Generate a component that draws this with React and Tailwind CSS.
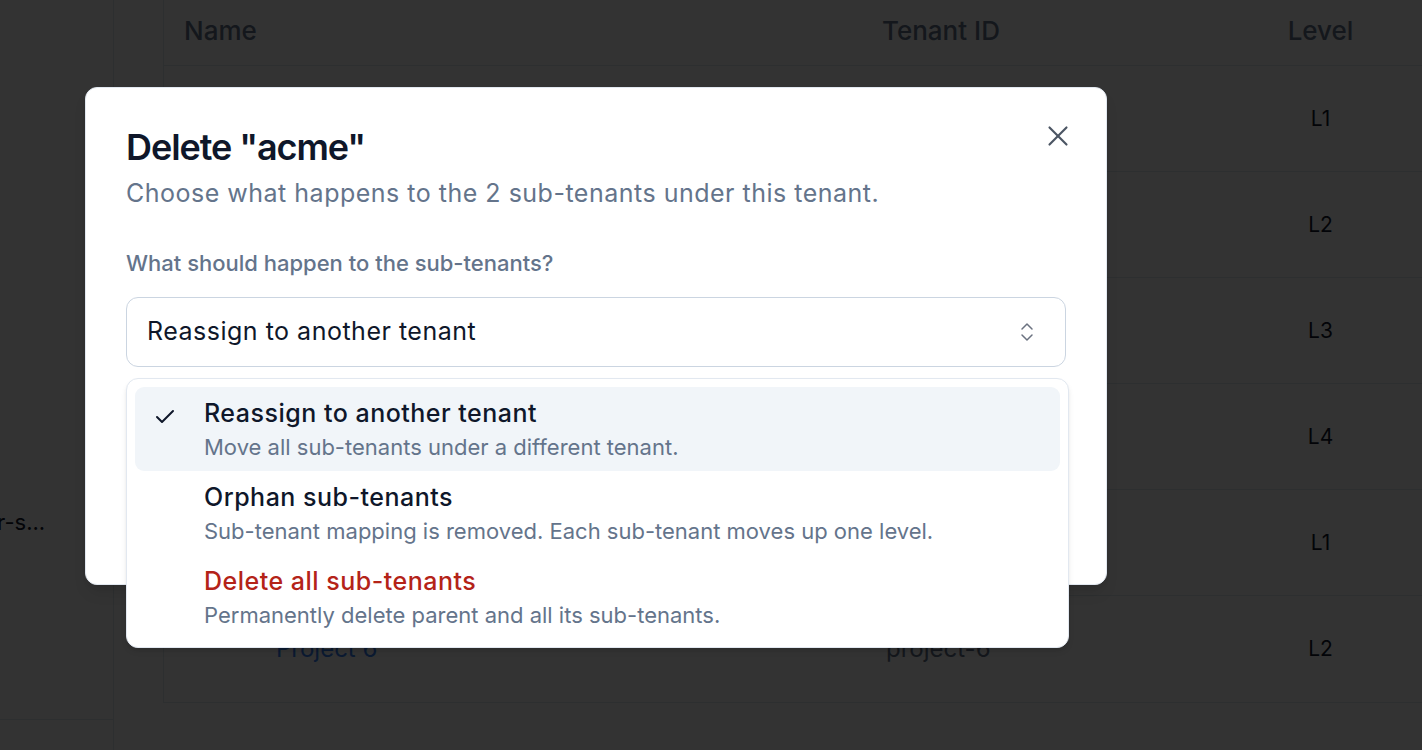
import React from "react";
import { Check, ChevronsUpDown, X } from "lucide-react";

const rows = [
  { name: "acme", id: "acme", level: "L1", indent: 0 },
  { name: "Project 2", id: "project-2", level: "L2", indent: 1 },
  { name: "Project 3", id: "project-3", level: "L3", indent: 2 },
  { name: "Project 4", id: "project-4", level: "L4", indent: 3 },
  { name: "Globex", id: "globex", level: "L1", indent: 0 },
  { name: "Project 6", id: "project-6", level: "L2", indent: 1 },
];

const indentClass = ["pl-[20px]", "pl-[112px]", "pl-[204px]", "pl-[296px]"];

const options = [
  {
    title: "Reassign to another tenant",
    desc: "Move all sub-tenants under a different tenant.",
    selected: true,
  },
  {
    title: "Orphan sub-tenants",
    desc: "Sub-tenant mapping is removed. Each sub-tenant moves up one level.",
  },
  {
    title: "Delete all sub-tenants",
    desc: "Permanently delete parent and all its sub-tenants.",
    danger: true,
  },
];

export default function App() {
  return (
    <div className="relative h-[750px] w-full overflow-hidden bg-white font-[Inter,'Noto_Sans',sans-serif] text-[#0f172a]">
      {/* Underlying page */}
      <div className="flex h-full">
        <aside className="flex w-[114px] shrink-0 flex-col border-r border-[#e2e8f0]">
          <div className="flex-1 overflow-hidden pt-[507px]">
            <div className="-ml-[3px] whitespace-nowrap text-[22px] leading-[30px] text-[#0f172a]">
              r-s...
            </div>
          </div>
          <div className="h-[31px] border-t border-[#e2e8f0]" />
        </aside>
        <main className="flex-1 pl-[49px]">
          <div className="border-b border-l border-[#e2e8f0]">
            <div className="grid h-[66px] grid-cols-[698px_357px_1fr] items-center border-b border-[#e2e8f0] text-[26px] font-medium text-[#64748b]">
              <div className="pl-[20px] pb-[5px]">Name</div>
              <div className="pl-[20px] pb-[5px]">Tenant ID</div>
              <div className="pb-[5px] text-center">Level</div>
            </div>
            {rows.map((r, i) => (
              <div
                key={r.id}
                className={
                  "grid h-[106px] grid-cols-[698px_357px_1fr] items-center text-[21px] " +
                  (i < rows.length - 1 ? "border-b border-[#e2e8f0]" : "")
                }
              >
                <div className={indentClass[r.indent] + " text-[24px] text-[#3b82f6]"}>{r.name}</div>
                <div className="pl-[24px] text-[24px] text-[#64748b]">{r.id}</div>
                <div className="text-center text-[#0f172a]">{r.level}</div>
              </div>
            ))}
          </div>
        </main>
      </div>

      {/* Overlay */}
      <div className="absolute inset-0 bg-black/80" />

      {/* Dialog */}
      <div className="absolute left-[85px] top-[87px] h-[498px] w-[1022px] rounded-[12px] border border-[#e2e8f0] bg-white px-[40px] pt-[39px] shadow-lg">
        <button className="absolute right-[31px] top-[31px] text-[#4b5563]">
          <X size={34} strokeWidth={1.5} />
        </button>
        <h2 className="text-[36px] font-semibold leading-[40px] tracking-[-0.03em] text-[#0f172a]">
          Delete "acme"
        </h2>
        <p className="mt-[8px] text-[25px] leading-[36px] tracking-[0.02em] text-[#64748b]">
          Choose what happens to the 2 sub-tenants under this tenant.
        </p>
        <div className="mt-[37px] text-[22px] font-medium leading-[30px] text-[#64748b]">
          What should happen to the sub-tenants?
        </div>
        <div className="relative mt-[19px]">
          <div className="flex h-[70px] items-center justify-between rounded-[12px] border-[1.5px] border-[#cbd5e1] pl-[20px] pr-[26px] text-[25px] tracking-[0.02em] text-[#0f172a]">
            <span>Reassign to another tenant</span>
            <ChevronsUpDown size={24} strokeWidth={1.5} className="text-[#6b7280]" />
          </div>

          {/* Dropdown */}
          <div className="absolute left-0 top-[81px] z-10 w-[943px] rounded-[12px] border border-[#e2e8f0] bg-white p-[8px] shadow-md">
            {options.map((o) => (
              <div
                key={o.title}
                className={
                  "relative rounded-[9px] py-[8px] pl-[69px] " + (o.selected ? "bg-[#f1f5f9]" : "")
                }
              >
                {o.selected && (
                  <Check
                    size={24}
                    strokeWidth={2}
                    className="absolute left-[18px] top-[18px] text-[#0f172a]"
                  />
                )}
                <div
                  className={
                    "text-[25px] font-medium leading-[36px] tracking-[0.02em] " +
                    (o.danger ? "text-[#b42318]" : "text-[#0f172a]")
                  }
                >
                  {o.title}
                </div>
                <div className="text-[22px] leading-[32px] text-[#64748b]">{o.desc}</div>
              </div>
            ))}
          </div>
        </div>
      </div>
    </div>
  );
}
